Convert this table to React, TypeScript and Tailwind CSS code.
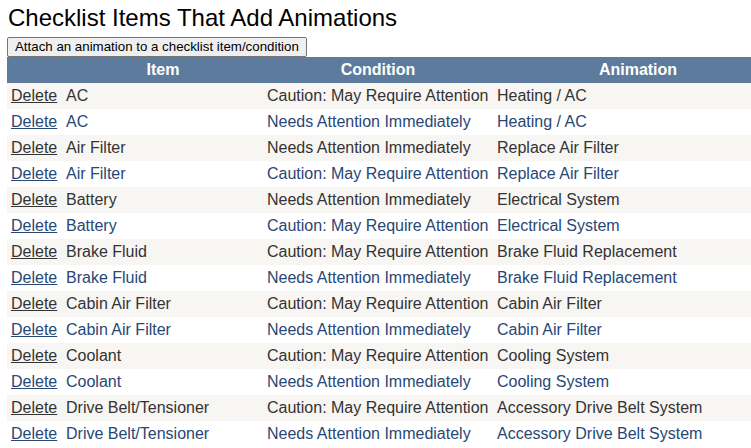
import React from 'react';

type Row = { item: string; condition: string; animation: string };

const rows: Row[] = [
    { item: 'AC', condition: 'Caution: May Require Attention', animation: 'Heating / AC' },
    { item: 'AC', condition: 'Needs Attention Immediately', animation: 'Heating / AC' },
    { item: 'Air Filter', condition: 'Needs Attention Immediately', animation: 'Replace Air Filter' },
    { item: 'Air Filter', condition: 'Caution: May Require Attention', animation: 'Replace Air Filter' },
    { item: 'Battery', condition: 'Needs Attention Immediately', animation: 'Electrical System' },
    { item: 'Battery', condition: 'Caution: May Require Attention', animation: 'Electrical System' },
    { item: 'Brake Fluid', condition: 'Caution: May Require Attention', animation: 'Brake Fluid Replacement' },
    { item: 'Brake Fluid', condition: 'Needs Attention Immediately', animation: 'Brake Fluid Replacement' },
    { item: 'Cabin Air Filter', condition: 'Caution: May Require Attention', animation: 'Cabin Air Filter' },
    { item: 'Cabin Air Filter', condition: 'Needs Attention Immediately', animation: 'Cabin Air Filter' },
    { item: 'Coolant', condition: 'Caution: May Require Attention', animation: 'Cooling System' },
    { item: 'Coolant', condition: 'Needs Attention Immediately', animation: 'Cooling System' },
    { item: 'Drive Belt/Tensioner', condition: 'Caution: May Require Attention', animation: 'Accessory Drive Belt System' },
    { item: 'Drive Belt/Tensioner', condition: 'Needs Attention Immediately', animation: 'Accessory Drive Belt System' },
];

export default function App() {
    return (
        <div className="h-[448px] w-[751px] overflow-hidden bg-white font-['Liberation_Sans',Arial,sans-serif]">
            <div className="pl-[7px]">
                <h2 className="pl-px pt-[4px] text-[24px] leading-[28px] text-black">Checklist Items That Add Animations</h2>
                {/* block so the line box doesn't add extra height */}
                <button className="mt-[5px] block h-[20px] rounded-[2px] border border-[#767676] bg-[#efefef] px-[7px] text-[13.3px] leading-[16px] text-black">
                    Attach an animation to a checklist item/condition
                </button>
                <table className="w-[776px] table-fixed border-collapse text-[16px]">
                    <colgroup>
                        <col className="w-[56px]" />
                        <col className="w-[200px]" />
                        <col className="w-[230px]" />
                        <col className="w-[290px]" />
                    </colgroup>
                    <thead>
                        <tr className="h-[26px] bg-[#5d7b9d] font-bold text-white">
                            <th></th>
                            <th className="text-center">Item</th>
                            <th className="text-center">Condition</th>
                            <th className="text-center">Animation</th>
                        </tr>
                    </thead>
                    <tbody>
                        {rows.map((r, i) => (
                            <tr
                                key={i}
                                className={i % 2 === 0 ? 'h-[26px] bg-[#f7f6f3] text-[#333333]' : 'h-[26px] bg-white text-[#284775]'}
                            >
                                <td className="whitespace-nowrap pl-[4px]">
                                    <a href="#" className="underline">Delete</a>
                                </td>
                                <td className="whitespace-nowrap pl-[3px]">{r.item}</td>
                                <td className="whitespace-nowrap pl-[4px]">{r.condition}</td>
                                <td className="whitespace-nowrap pl-[4px]">{r.animation}</td>
                            </tr>
                        ))}
                    </tbody>
                </table>
            </div>
        </div>
    );
}
